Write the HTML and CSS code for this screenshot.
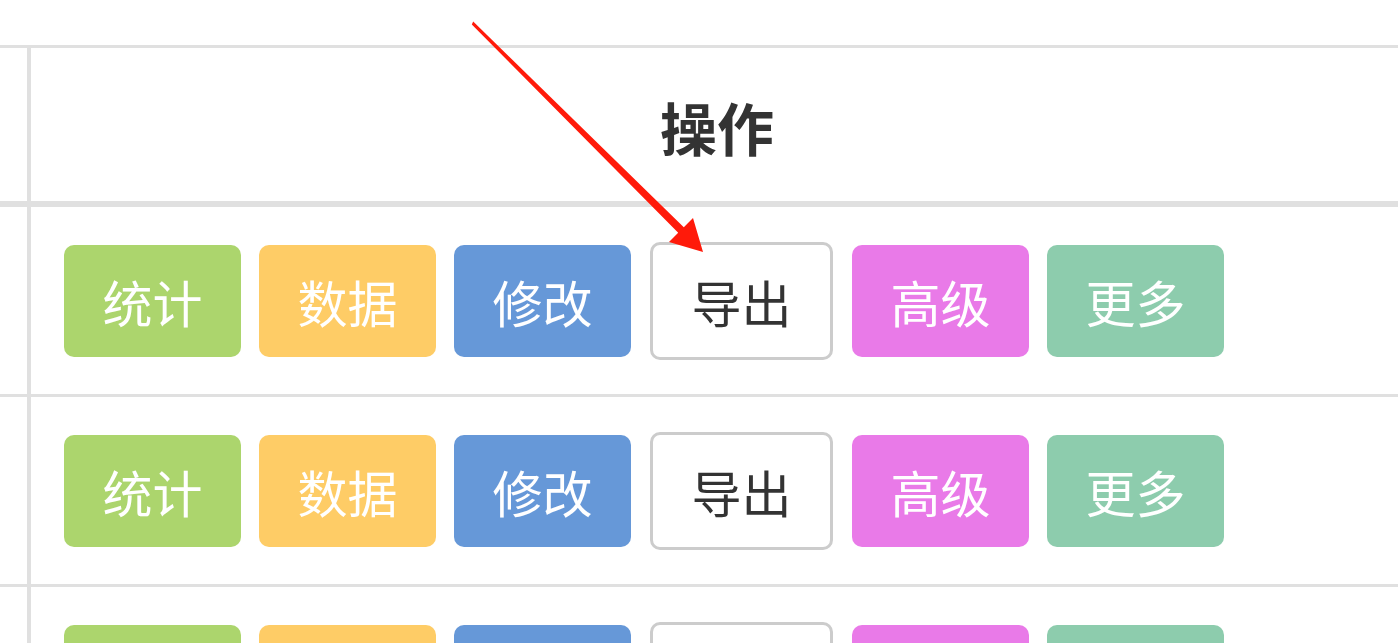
FILE: index.html
```html
<!DOCTYPE html>
<html lang="zh-CN">
<head>
<meta charset="utf-8">
<title>操作</title>
<link rel="stylesheet" href="styles.css">
</head>
<body>
<div class="table">
  <div class="row head">
    <div class="lead"></div>
    <div class="cell head-cell">操作</div>
  </div>
  <div class="row">
    <div class="lead"></div>
    <div class="cell actions">
      <span class="btn green">统计</span>
      <span class="btn orange">数据</span>
      <span class="btn blue">修改</span>
      <span class="btn plain">导出</span>
      <span class="btn pink">高级</span>
      <span class="btn mint">更多</span>
    </div>
  </div>
  <div class="row">
    <div class="lead"></div>
    <div class="cell actions">
      <span class="btn green">统计</span>
      <span class="btn orange">数据</span>
      <span class="btn blue">修改</span>
      <span class="btn plain">导出</span>
      <span class="btn pink">高级</span>
      <span class="btn mint">更多</span>
    </div>
  </div>
  <div class="row">
    <div class="lead"></div>
    <div class="cell actions">
      <span class="btn green">统计</span>
      <span class="btn orange">数据</span>
      <span class="btn blue">修改</span>
      <span class="btn plain">导出</span>
      <span class="btn pink">高级</span>
      <span class="btn mint">更多</span>
    </div>
  </div>
</div>
<svg class="arrow" width="1398" height="643" viewBox="0 0 1398 643" aria-hidden="true">
  <polygon fill="#ff1a0a" points="473.2,21.6 683.8,227.2 693,218 703,252 669,242 678.2,232.8 471.8,24.4"/>
</svg>
</body>
</html>
```

FILE: styles.css
```css
html, body {
  margin: 0;
  padding: 0;
  background: #ffffff;
}

body {
  width: 1398px;
  height: 643px;
  overflow: hidden;
  position: relative;
  font-family: "Noto Sans CJK SC", "Noto Sans", sans-serif;
}

.table {
  margin-top: 45px;
  width: 1403px;
  border-top: 3px solid #e0e0e0;
}

.row {
  display: flex;
  border-bottom: 3px solid #e0e0e0;
}

.row.head {
  height: 153px;
  border-bottom-width: 6px;
}

.lead {
  width: 27px;
  flex: none;
  border-right: 4px solid #e0e0e0;
}

.cell {
  flex: 1;
  display: flex;
  align-items: center;
}

.head-cell {
  box-sizing: border-box;
  justify-content: center;
  font-size: 57px;
  font-weight: 700;
  color: #333333;
  line-height: 1;
  padding-top: 3px;
}

.actions {
  padding: 38px 0 37px 33px;
  gap: 18px;
}

.btn {
  box-sizing: border-box;
  width: 177px;
  height: 112px;
  border-radius: 10px;
  display: flex;
  align-items: center;
  justify-content: center;
  font-size: 50px;
  line-height: 1;
  color: #ffffff;
  flex: none;
}

.green { background: #acd56d; }
.orange { background: #fecc66; }
.blue { background: #6698d8; }
.pink { background: #e97ae8; }
.mint { background: #8dccad; }

.plain {
  width: 183px;
  height: 118px;
  margin: -3px 1px;
  border: 3px solid #cccccc;
  background: #ffffff;
  color: #333333;
}

.arrow {
  position: absolute;
  left: 0;
  top: 0;
  pointer-events: none;
}
```
